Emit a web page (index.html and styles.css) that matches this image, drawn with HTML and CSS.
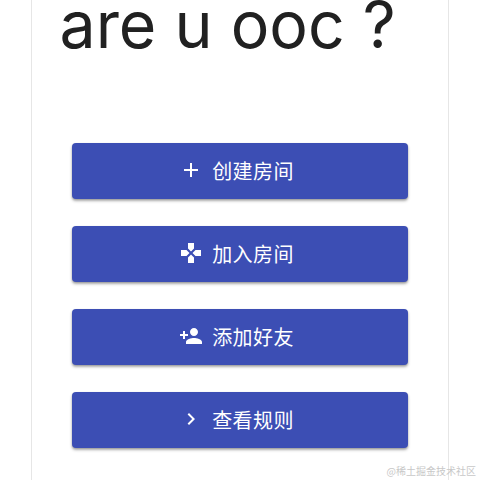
FILE: index.html
```html
<!DOCTYPE html>
<html lang="zh-CN">
<head>
<meta charset="utf-8">
<title>are u ooc ?</title>
<link rel="stylesheet" href="styles.css">
</head>
<body>
<main class="card">
  <h1 class="title">are u ooc ?</h1>
  <nav class="actions">
    <button class="btn"><svg class="icon" viewBox="0 0 24 24"><path d="M19 13h-6v6h-2v-6H5v-2h6V5h2v6h6v2z"/></svg><span>创建房间</span></button>
    <button class="btn"><svg class="icon" viewBox="0 0 24 24"><path d="M15 7.5V2H9v5.5l3 3 3-3zM7.5 9H2v6h5.5l3-3-3-3zM9 16.500V22h6v-5.500l-3-3-3 3zM16.500 9l-3 3 3 3H22V9h-5.500z"/></svg><span>加入房间</span></button>
    <button class="btn"><svg class="icon" viewBox="0 0 24 24"><path d="M15 12c2.210 0 4-1.790 4-4s-1.790-4-4-4-4 1.790-4 4 1.790 4 4 4zm-9-2V7H4v3H1v2h3v3h2v-3h3v-2H6zm9 4c-2.670 0-8 1.340-8 4v2h16v-2c0-2.660-5.330-4-8-4z"/></svg><span>添加好友</span></button>
    <button class="btn"><svg class="icon" viewBox="0 0 24 24"><path d="M10 6L8.590 7.410 13.170 12l-4.580 4.590L10 18l6-6z"/></svg><span>查看规则</span></button>
  </nav>
</main>
<footer class="mark">@稀土掘金技术社区</footer>
</body>
</html>
```
FILE: styles.css
```css
html, body {
  margin: 0;
  height: 480px;
  overflow: hidden;
  background: #fff;
}
body {
  font-family: Roboto, "Noto Sans CJK SC", sans-serif;
  display: flex;
  justify-content: center;
}
.card {
  box-sizing: border-box;
  width: 418px;
  height: 480px;
  margin-left: -1px;
  padding: 0 40px;
  border-left: 1px solid #e6e6e6;
  border-right: 1px solid #e6e6e6;
}
.title {
  margin: 0 0 0 -12px;
  height: 143px;
  font-family: Inter, sans-serif;
  font-size: 64.4px;
  line-height: 50px;
  font-weight: 400;
  color: #212121;
  white-space: nowrap;
}
.actions {
  display: flex;
  flex-direction: column;
  gap: 27px;
}
.btn {
  display: flex;
  align-items: center;
  justify-content: center;
  gap: 9px;
  height: 56px;
  width: 336px;
  border: 0;
  border-radius: 4px;
  padding: 0 6px 2px 0;
  background: #3c4eb4;
  color: #fff;
  font-family: Roboto, "Noto Sans CJK SC", sans-serif;
  font-size: 20px;
  letter-spacing: 0.4px;
  box-shadow: 0 2px 3px rgba(0,0,0,.3), 0 1px 2px rgba(0,0,0,.15);
}
.icon {
  width: 24px;
  height: 24px;
  fill: #fff;
  flex: none;
}
.mark {
  position: absolute;
  right: 4px;
  bottom: 2px;
  font-family: "Noto Sans CJK SC", sans-serif;
  font-size: 10px;
  color: #c8c8c8;
}
```
